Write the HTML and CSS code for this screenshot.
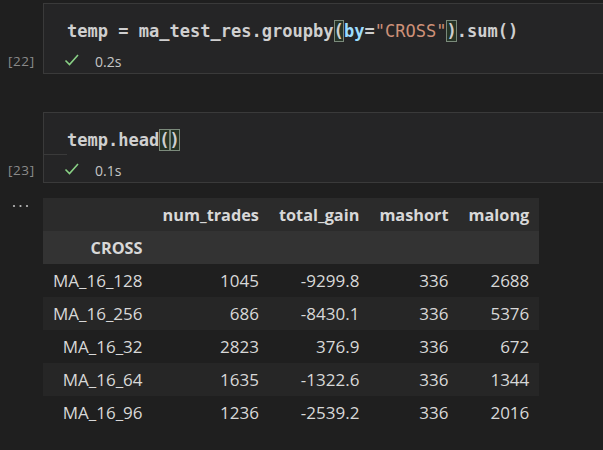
FILE: index.html
```html
<!DOCTYPE html>
<html>
<head>
<meta charset="utf-8">
<link rel="stylesheet" href="styles.css">
</head>
<body>
<div class="notebook">
  <div class="cell cell-first">
    <div class="gutter"><span class="count">[22]</span></div>
    <div class="box">
      <div class="code"><span class="tx">temp = ma_test_res.groupby</span><span class="br">(</span><span class="kw">by</span><span class="tx">=</span><span class="str">"CROSS"</span><span class="br">)</span><span class="tx">.sum()</span></div>
      <div class="status">
        <svg class="check" width="16" height="14" viewBox="0 0 16 14"><path d="M1.5 7.5 L5.5 11.5 L14 2" fill="none" stroke="#89d185" stroke-width="1.6"/></svg>
        <span class="time">0.2s</span>
      </div>
    </div>
  </div>

  <div class="cell cell-second">
    <div class="gutter"><span class="count">[23]</span></div>
    <div class="box">
      <div class="code"><span class="tx">temp.head</span><span class="br">(</span><span class="br">)</span></div>
      <div class="divider"></div>
      <div class="status">
        <svg class="check" width="16" height="14" viewBox="0 0 16 14"><path d="M1.5 7.5 L5.5 11.5 L14 2" fill="none" stroke="#89d185" stroke-width="1.6"/></svg>
        <span class="time">0.1s</span>
      </div>
    </div>
  </div>

  <div class="output">
    <div class="gutter-out">
      <svg class="dots" width="18" height="4" viewBox="0 0 18 4"><circle cx="2" cy="2" r="1.1" fill="#bdbdbd"/><circle cx="8.5" cy="2" r="1.1" fill="#bdbdbd"/><circle cx="15" cy="2" r="1.1" fill="#bdbdbd"/></svg>
    </div>
    <table class="df">
      <thead>
        <tr class="h1"><th></th><th>num_trades</th><th>total_gain</th><th>mashort</th><th>malong</th></tr>
        <tr class="h2"><th>CROSS</th><th></th><th></th><th></th><th></th></tr>
      </thead>
      <tbody>
        <tr><th>MA_16_128</th><td>1045</td><td>-9299.8</td><td>336</td><td>2688</td></tr>
        <tr class="alt"><th>MA_16_256</th><td>686</td><td>-8430.1</td><td>336</td><td>5376</td></tr>
        <tr><th>MA_16_32</th><td>2823</td><td>376.9</td><td>336</td><td>672</td></tr>
        <tr class="alt"><th>MA_16_64</th><td>1635</td><td>-1322.6</td><td>336</td><td>1344</td></tr>
        <tr><th>MA_16_96</th><td>1236</td><td>-2539.2</td><td>336</td><td>2016</td></tr>
      </tbody>
    </table>
  </div>
</div>
</body>
</html>
```

FILE: styles.css
```css
html, body {
  margin: 0;
  padding: 0;
  background: #1f1f1f;
  overflow: hidden;
}
body {
  width: 603px;
  height: 450px;
  font-family: "Open Sans", "Noto Sans", sans-serif;
  color: #cccccc;
}
.notebook {
  padding-top: 3px;
  width: 603px;
  overflow: hidden;
}
.cell {
  display: grid;
  grid-template-columns: 43px 1fr;
}
.cell-second {
  margin-top: 38px;
}
.gutter {
  display: flex;
  align-items: flex-end;
  padding-left: 8px;
  padding-bottom: 5px;
}
.count {
  font-family: "Open Sans", sans-serif;
  font-size: 13.5px;
  color: #8a8a8a;
  line-height: 16px;
  letter-spacing: 0.6px;
}
.box {
  border: 1px solid #3a3a3a;
  border-right: none;
  background: #252526;
  width: 600px;
  height: 69px;
}
.code {
  font-family: "DejaVu Sans Mono", monospace;
  font-weight: bold;
  font-size: 17.05px;
  line-height: 22px;
  padding: 16px 0 0 23px;
  height: 22px;
  color: #cfcfcf;
  white-space: pre;
}
.kw { color: #9cdcfe; }
.str { color: #ce9178; font-weight: normal; }
.tx { color: #cfcfcf; }
.br {
  display: inline-block;
  background: rgba(40, 80, 40, 0.35);
  box-shadow: inset 0 0 0 1px #7b8a7b;
  height: 22px;
  color: #cfcfcf;
}
.divider {
  width: 23px;
  height: 1px;
  background: #3a3a3a;
  margin-top: 3px;
  margin-bottom: -4px;
}
.status {
  display: flex;
  align-items: center;
  height: 20px;
  padding: 9px 0 0 20px;
}
.check {
  display: block;
  margin-top: -2px;
}
.time {
  margin-left: 15px;
  font-size: 14px;
  color: #c5c5c5;
}
.output {
  display: grid;
  grid-template-columns: 43px auto;
  margin-top: 15px;
}
.gutter-out {
  padding-left: 12px;
  padding-top: 6px;
}
.dots {
  display: block;
}
.df {
  border-collapse: collapse;
  font-size: 17px;
  color: #d8d8d8;
  justify-self: start;
}
.df th, .df td {
  padding: 0 10px;
  height: 33px;
  text-align: right;
  white-space: nowrap;
}
.df thead th {
  font-weight: bold;
  font-size: 16.3px;
}
.df tbody th {
  font-weight: normal;
}
.df .h1 { background: #2b2b2b; }
.df .h2 { background: #333333; }
.df tbody tr { background: #1f1f1f; }
.df tbody tr.alt { background: #262626; }
```
